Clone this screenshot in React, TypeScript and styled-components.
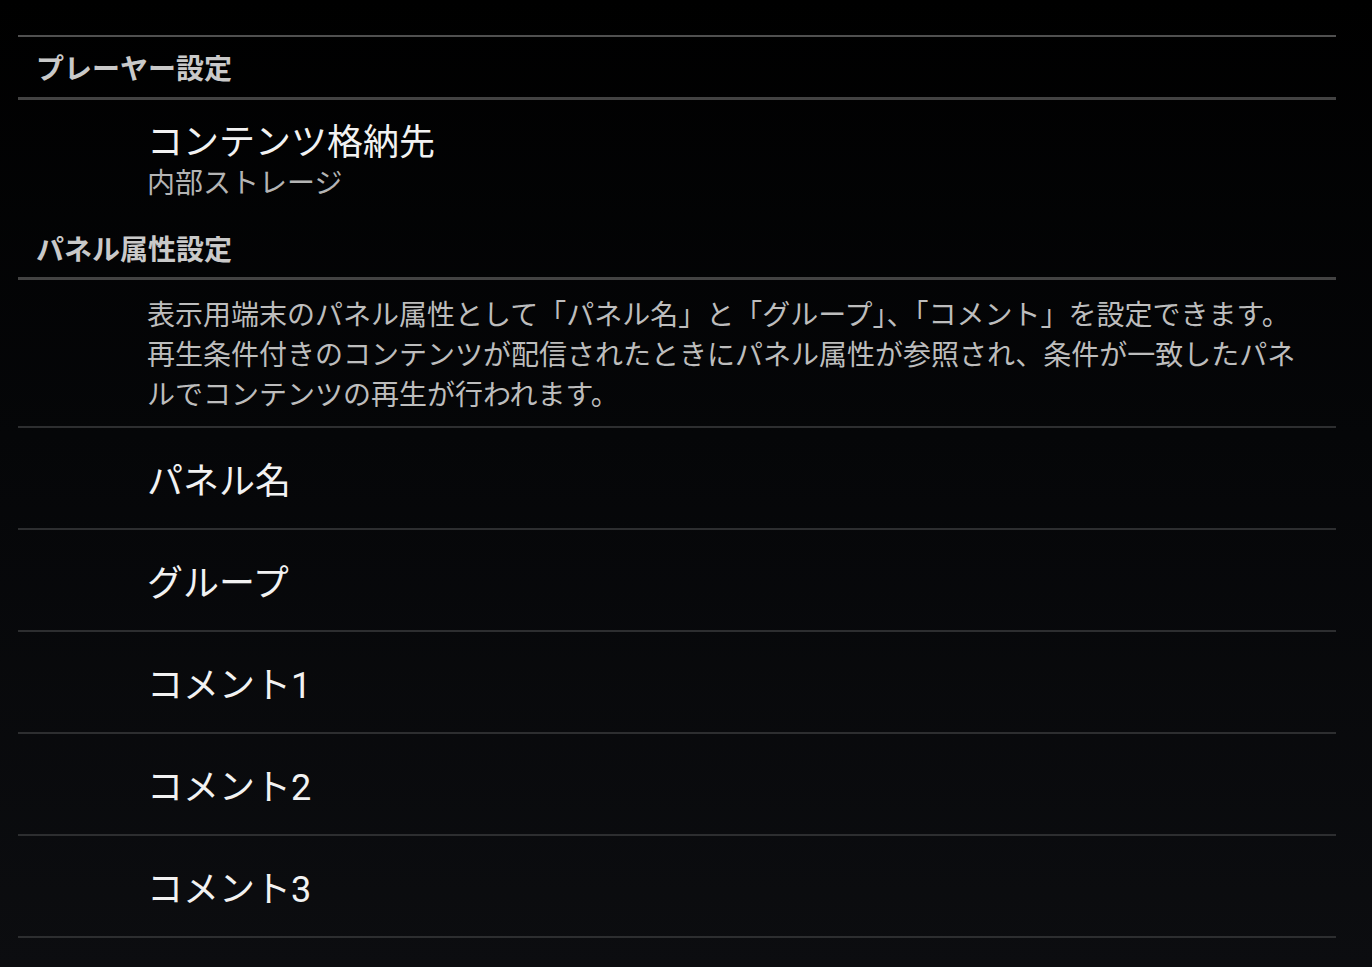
import React from "react";
import styled, { createGlobalStyle } from "styled-components";

const GlobalStyle = createGlobalStyle`
  html, body {
    margin: 0;
    padding: 0;
    min-height: 100%;
  }
  body {
    min-height: 967px;
    background: linear-gradient(180deg, #000000 0%, #050608 45%, #0c0d10 100%);
    font-family: Roboto, "Noto Sans CJK JP", sans-serif;
  }
`;

const Screen = styled.div`
  width: 1318px;
  margin-left: 18px;
  padding-top: 35px;
`;

const TopRule = styled.div`
  height: 2px;
  background: #505050;
`;

const CategoryHeader = styled.div<{ $height: number }>`
  height: ${(p) => p.$height}px;
  display: flex;
  align-items: center;
  padding-left: 18px;
  font-size: 28px;
  font-weight: 700;
  color: #c9c9c9;
  border-bottom: 3px solid #434343;
`;

const PrefItem = styled.div`
  padding: 22px 0 14px 129px;
`;

const PrefTitle = styled.div`
  font-size: 36px;
  line-height: 42px;
  color: #f2f2f2;
`;

const PrefSummary = styled.div`
  font-size: 28px;
  line-height: 40px;
  color: #b4b4b4;
`;

const Description = styled.div`
  padding: 16px 0 10px 129px;
  font-size: 28px;
  line-height: 40px;
  color: #bdbdbd;
  white-space: nowrap;
  border-bottom: 2px solid #2d2e30;
`;

const Row = styled.div`
  height: 100px;
  display: flex;
  align-items: center;
  padding-left: 129px;
  font-size: 36px;
  color: #f2f2f2;
  border-bottom: 2px solid #2d2e30;
`;

const rows = ["パネル名", "グループ", "コメント1", "コメント2", "コメント3"];

export default function App() {
  return (
    <>
      <GlobalStyle />
      <Screen>
        <TopRule />
        <CategoryHeader $height={60}>プレーヤー設定</CategoryHeader>
        <PrefItem>
          <PrefTitle>コンテンツ格納先</PrefTitle>
          <PrefSummary>内部ストレージ</PrefSummary>
        </PrefItem>
        <CategoryHeader $height={59}>パネル属性設定</CategoryHeader>
        <Description>
          表示用端末のパネル属性として「パネル名」と「グループ」、「コメント」を設定できます。
          <br />
          再生条件付きのコンテンツが配信されたときにパネル属性が参照され、条件が一致したパネ
          <br />
          ルでコンテンツの再生が行われます。
        </Description>
        {rows.map((r) => (
          <Row key={r}>{r}</Row>
        ))}
      </Screen>
    </>
  );
}
